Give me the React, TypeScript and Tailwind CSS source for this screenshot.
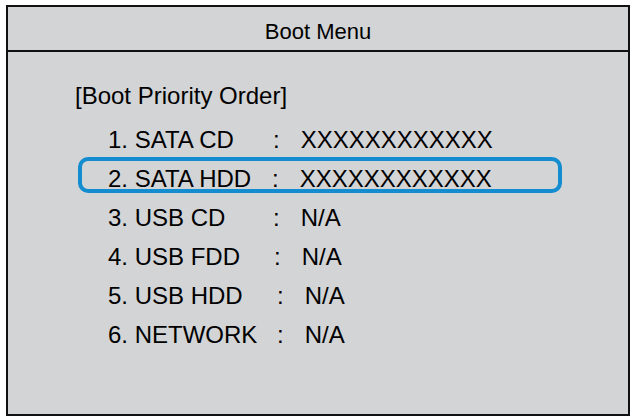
import React from 'react'

const rows = [
  { label: '1. SATA CD', value: 'XXXXXXXXXXXX', w: 'w-[165px]', active: false },
  { label: '2. SATA HDD', value: 'XXXXXXXXXXXX', w: 'w-[164px]', active: true },
  { label: '3. USB CD', value: 'N/A', w: 'w-[165px]', active: false },
  { label: '4. USB FDD', value: 'N/A', w: 'w-[166px]', active: false },
  { label: '5. USB HDD', value: 'N/A', w: 'w-[169px]', active: false },
  { label: '6. NETWORK', value: 'N/A', w: 'w-[169px]', active: false },
]

export default function App() {
  return (
    <div className="w-[634px] h-[420px] bg-white pt-[5px] pl-[6px] font-['Liberation_Sans',Arial,sans-serif] text-black">
      <div className="w-[624px] h-[411px] border-2 border-[#111] bg-[#d3d4d6] flex flex-col">
        <div className="h-[45px] flex items-center justify-center pt-[5px] text-[22px] border-b-2 border-[#111]">
          Boot Menu
        </div>
        <div className="flex flex-col pt-[30px]">
          <div className="ml-[67px] text-[24px] leading-[28px]">[Boot Priority Order]</div>
          <div className="flex flex-col gap-[3px] mt-[8px]">
            {rows.map((r) => (
              <div
                key={r.label}
                className={
                  r.active
                    ? 'ml-[70px] w-[484px] h-[36px] border-4 border-[#138dd0] rounded-[10px] pl-[26px] pt-[8px] flex items-center text-[24px]'
                    : 'ml-[70px] w-[484px] h-[36px] border-4 border-transparent rounded-[10px] pl-[26px] pt-[8px] flex items-center text-[24px]'
                }
              >
                <span className={`${r.w} shrink-0 whitespace-nowrap`}>{r.label}</span>
                <span>:</span>
                <span className="ml-[21px]">{r.value}</span>
              </div>
            ))}
          </div>
        </div>
      </div>
    </div>
  )
}
